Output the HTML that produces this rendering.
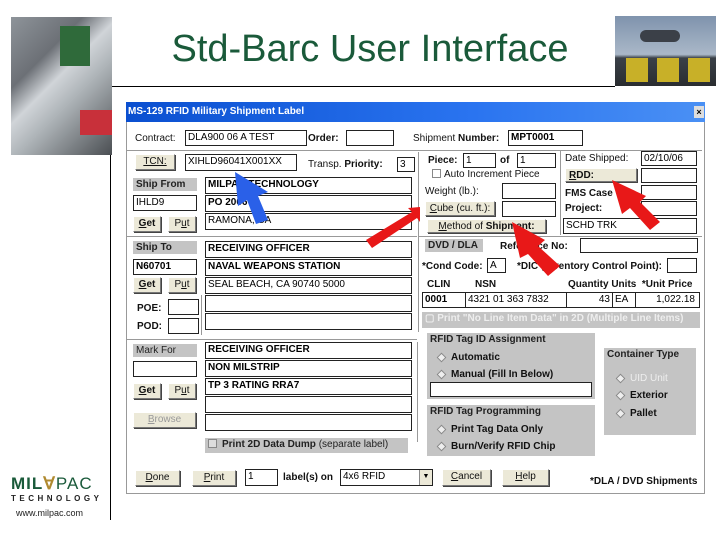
<!DOCTYPE html>
<html><head><meta charset="utf-8"><style>
*{margin:0;padding:0;box-sizing:border-box}
body{width:720px;height:540px;background:#fff;position:relative;overflow:hidden;font-family:"Liberation Sans",sans-serif}
.a{position:absolute}
.t{position:absolute;font-size:10px;color:#111;white-space:nowrap;line-height:12px}
.bd{font-weight:bold}
.i{position:absolute;background:#fff;border:1px solid #222;font-size:10px;line-height:13px;padding-left:2px;white-space:nowrap;overflow:hidden;color:#000}
.b{position:absolute;background:#ece9d8;border:1px solid;border-color:#fff #777 #777 #fff;box-shadow:1px 1px 0 #444;font-size:10px;line-height:13px;text-align:center;color:#111}
.g{position:absolute;background:#c4c4c4;font-size:10px;font-weight:bold;line-height:13px;padding-left:3px;color:#222}
.hl{position:absolute;height:1px;background:#999}
.vl{position:absolute;width:1px;background:#999}
.r{display:inline-block;width:7px;height:7px;border:1px solid #888;transform:rotate(45deg);margin-right:6px;background:#eee;vertical-align:middle}
</style></head><body>
<div class="a" style="left:11px;top:17px;width:101px;height:138px;background:linear-gradient(135deg,#8e949a 0%,#6c7076 30%,#d0d4d8 45%,#aeb4b8 60%,#4a4e52 100%)"></div>
<div class="a" style="left:60px;top:26px;width:30px;height:40px;background:#2f6a3a"></div>
<div class="a" style="left:80px;top:110px;width:32px;height:25px;background:#c8303a"></div>
<div class="a" style="left:615px;top:16px;width:101px;height:70px;background:linear-gradient(#7f93ad,#aab8c8 55%,#3a4048 60%,#2a2d30)"></div>
<div class="a" style="left:626px;top:58px;width:22px;height:24px;background:#c8b028"></div>
<div class="a" style="left:657px;top:58px;width:22px;height:24px;background:#c8b028"></div>
<div class="a" style="left:688px;top:58px;width:22px;height:24px;background:#c8b028"></div>
<div class="a" style="left:640px;top:30px;width:40px;height:12px;background:#3b4048;border-radius:6px"></div>
<div class="a" style="left:112px;top:86px;width:503px;height:1px;background:#000"></div>
<div class="a" style="left:110px;top:155px;width:1px;height:365px;background:#000"></div>
<div class="t" style="left:0;width:740px;text-align:center;top:28px;font-size:38px;line-height:42px;color:#1a5a3a">Std-Barc User Interface</div>
<div class="t" style="left:11px;top:475px;font-size:17px;line-height:17px;font-weight:900;color:#1a5a3a;letter-spacing:1px">MIL<span style="color:#b08a30">∀</span><span style="font-weight:normal">PAC</span></div>
<div class="t" style="left:11px;top:494px;font-size:8px;line-height:9px;font-weight:bold;letter-spacing:3.5px;color:#222">TECHNOLOGY</div>
<div class="t" style="left:16px;top:507px;font-size:9px;color:#222">www.milpac.com</div>
<div class="a" style="left:126px;top:102px;width:579px;height:392px;background:#fff;border:1px solid #999;border-top:none"></div>
<div class="a" style="left:126px;top:102px;width:579px;height:20px;background:linear-gradient(90deg,#0a4fd0,#2a74f0 60%,#4a90f4)"></div>
<div class="t bd" style="left:128px;top:106px;color:#fff">MS-129 RFID Military Shipment Label</div>
<div class="a" style="left:694px;top:106px;width:10px;height:12px;background:#ddd;font-size:9px;font-weight:bold;text-align:center;line-height:12px">×</div>
<div class="t" style="left:135px;top:133px">Contract:</div>
<div class="i" style="left:185px;top:130px;width:122px;height:16px">DLA900 06 A TEST</div>
<div class="t bd" style="left:308px;top:133px">Order:</div>
<div class="i" style="left:346px;top:130px;width:48px;height:16px"></div>
<div class="t" style="left:413px;top:133px">Shipment <b>Number:</b></div>
<div class="i bd" style="left:508px;top:130px;width:75px;height:16px">MPT0001</div>
<div class="hl" style="left:127px;top:150px;width:575px"></div>
<div class="b" style="left:135px;top:154px;width:40px;height:16px;text-decoration:underline">TCN:</div>
<div class="i" style="left:185px;top:154px;width:112px;height:17px">XIHLD96041X001XX</div>
<div class="t" style="left:308px;top:159px">Transp. <b>Priority:</b></div>
<div class="i" style="left:397px;top:157px;width:18px;height:15px">3</div>
<div class="vl" style="left:418px;top:152px;height:180px"></div>
<div class="vl" style="left:560px;top:150px;height:85px"></div>
<div class="t bd" style="left:428px;top:155px">Piece: </div>
<div class="i" style="left:463px;top:153px;width:33px;height:15px">1</div>
<div class="t bd" style="left:500px;top:155px">of</div>
<div class="i" style="left:517px;top:153px;width:39px;height:15px">1</div>
<div class="t" style="left:432px;top:169px"><span style="display:inline-block;width:9px;height:9px;border:1px solid #888;vertical-align:-1px;margin-right:3px"></span>Auto Increment Piece</div>
<div class="t" style="left:565px;top:153px">Date Shipped:</div>
<div class="i" style="left:641px;top:151px;width:56px;height:15px">02/10/06</div>
<div class="b bd" style="left:565px;top:168px;width:72px;height:14px;text-align:left;padding-left:3px"><u>R</u>DD:</div>
<div class="i" style="left:641px;top:168px;width:56px;height:15px"></div>
<div class="t" style="left:425px;top:186px">Weight (lb.):</div>
<div class="i" style="left:502px;top:183px;width:54px;height:16px"></div>
<div class="t bd" style="left:565px;top:188px">FMS Case</div>
<div class="i" style="left:641px;top:185px;width:56px;height:15px"></div>
<div class="b" style="left:425px;top:201px;width:70px;height:15px"><u>C</u>ube (cu. ft.):</div>
<div class="i" style="left:502px;top:201px;width:54px;height:16px"></div>
<div class="t bd" style="left:565px;top:203px">Project:</div>
<div class="i" style="left:641px;top:201px;width:56px;height:15px"></div>
<div class="b" style="left:427px;top:219px;width:119px;height:14px"><u>M</u>ethod of <b>Shipment:</b></div>
<div class="i" style="left:563px;top:218px;width:134px;height:16px">SCHD TRK</div>
<div class="hl" style="left:419px;top:236px;width:283px"></div>
<div class="g" style="left:425px;top:239px;width:58px;height:13px">DVD / DLA</div>
<div class="t bd" style="left:500px;top:241px">Reference No:</div>
<div class="i" style="left:580px;top:238px;width:118px;height:15px"></div>
<div class="t bd" style="left:422px;top:261px">*Cond Code:</div>
<div class="i" style="left:487px;top:258px;width:19px;height:15px">A</div>
<div class="t bd" style="left:517px;top:261px">*DIC (Inventory Control Point):</div>
<div class="i" style="left:667px;top:258px;width:30px;height:15px"></div>
<div class="t bd" style="left:427px;top:279px">CLIN</div>
<div class="t bd" style="left:475px;top:279px">NSN</div>
<div class="t bd" style="left:568px;top:279px">Quantity Units &nbsp;*Unit Price</div>
<div class="i bd" style="left:422px;top:292px;width:44px;height:16px">0001</div>
<div class="i" style="left:465px;top:292px;width:102px;height:16px">4321 01 363 7832</div>
<div class="i" style="left:566px;top:292px;width:47px;height:16px;text-align:right;padding-right:2px">43</div>
<div class="i" style="left:612px;top:292px;width:24px;height:16px">EA</div>
<div class="i" style="left:635px;top:292px;width:65px;height:16px;text-align:right;padding-right:4px">1,022.18</div>
<div class="g" style="left:422px;top:312px;width:278px;height:16px;color:#eee;font-weight:bold">▢ Print "No Line Item Data" in 2D (Multiple Line Items)</div>
<div class="g" style="left:427px;top:333px;width:168px;height:66px">RFID Tag ID Assignment</div>
<div class="t bd" style="left:438px;top:352px"><span class="r"></span>Automatic</div>
<div class="t bd" style="left:438px;top:369px"><span class="r"></span>Manual (Fill In Below)</div>
<div class="i" style="left:430px;top:382px;width:162px;height:15px"></div>
<div class="g" style="left:427px;top:405px;width:168px;height:51px">RFID Tag Programming</div>
<div class="t bd" style="left:438px;top:424px"><span class="r"></span>Print Tag Data Only</div>
<div class="t bd" style="left:438px;top:441px"><span class="r"></span>Burn/Verify RFID Chip</div>
<div class="g" style="left:604px;top:348px;width:92px;height:87px;font-weight:bold">Container Type</div>
<div class="t" style="left:617px;top:373px;color:#eee"><span class="r"></span>UID Unit</div>
<div class="t bd" style="left:617px;top:390px"><span class="r"></span>Exterior</div>
<div class="t bd" style="left:617px;top:408px"><span class="r"></span>Pallet</div>
<div class="g" style="left:133px;top:178px;width:64px;height:13px">Ship From</div>
<div class="i" style="left:133px;top:195px;width:64px;height:16px">IHLD9</div>
<div class="b bd" style="left:133px;top:216px;width:28px;height:16px"><u>G</u>et</div>
<div class="b" style="left:168px;top:216px;width:28px;height:16px">P<u>u</u>t</div>
<div class="i bd" style="left:205px;top:177px;width:207px;height:17px">MILPAC TECHNOLOGY</div>
<div class="i bd" style="left:205px;top:195px;width:207px;height:17px">PO 2066</div>
<div class="i" style="left:205px;top:213px;width:207px;height:17px">RAMONA, CA</div>
<div class="hl" style="left:127px;top:236px;width:290px"></div>
<div class="g" style="left:133px;top:241px;width:64px;height:13px">Ship To</div>
<div class="i bd" style="left:133px;top:259px;width:64px;height:16px">N60701</div>
<div class="b bd" style="left:133px;top:277px;width:28px;height:16px"><u>G</u>et</div>
<div class="b" style="left:168px;top:277px;width:28px;height:16px">P<u>u</u>t</div>
<div class="i bd" style="left:205px;top:241px;width:207px;height:17px">RECEIVING OFFICER</div>
<div class="i bd" style="left:205px;top:259px;width:207px;height:17px">NAVAL WEAPONS STATION</div>
<div class="i" style="left:205px;top:277px;width:207px;height:17px">SEAL BEACH, CA 90740 5000</div>
<div class="i" style="left:205px;top:295px;width:207px;height:17px"></div>
<div class="i" style="left:205px;top:313px;width:207px;height:17px"></div>
<div class="t bd" style="left:137px;top:303px">POE:</div>
<div class="i" style="left:168px;top:299px;width:31px;height:16px"></div>
<div class="t bd" style="left:137px;top:321px">POD:</div>
<div class="i" style="left:168px;top:318px;width:31px;height:16px"></div>
<div class="vl" style="left:201px;top:295px;height:40px"></div>
<div class="hl" style="left:127px;top:339px;width:290px"></div>
<div class="g" style="left:133px;top:344px;width:64px;height:13px;font-weight:normal">Mark For</div>
<div class="i" style="left:133px;top:361px;width:64px;height:16px"></div>
<div class="b bd" style="left:133px;top:383px;width:28px;height:16px"><u>G</u>et</div>
<div class="b" style="left:168px;top:383px;width:28px;height:16px">P<u>u</u>t</div>
<div class="b" style="left:133px;top:412px;width:63px;height:16px;color:#999"><u>B</u>rowse</div>
<div class="i bd" style="left:205px;top:342px;width:207px;height:17px">RECEIVING OFFICER</div>
<div class="i bd" style="left:205px;top:360px;width:207px;height:17px">NON MILSTRIP</div>
<div class="i bd" style="left:205px;top:378px;width:207px;height:17px">TP 3 RATING RRA7</div>
<div class="i" style="left:205px;top:396px;width:207px;height:17px"></div>
<div class="i" style="left:205px;top:414px;width:207px;height:17px"></div>
<div class="vl" style="left:417px;top:342px;height:100px"></div>
<div class="g" style="left:205px;top:438px;width:203px;height:15px"><span style="display:inline-block;width:9px;height:9px;border:1px solid #888;background:#ddd;vertical-align:-1px;margin-right:5px"></span>Print 2D Data Dump <span style="font-weight:normal">(separate label)</span></div>
<div class="b" style="left:135px;top:470px;width:45px;height:16px"><u>D</u>one</div>
<div class="b" style="left:192px;top:470px;width:44px;height:16px"><u>P</u>rint</div>
<div class="i" style="left:245px;top:469px;width:33px;height:17px">1</div>
<div class="t bd" style="left:283px;top:472px">label(s) on</div>
<div class="i" style="left:340px;top:469px;width:93px;height:17px">4x6 RFID<span style="position:absolute;right:0;top:0;width:13px;height:15px;background:#ece9d8;border-left:1px solid #888;font-size:7px;text-align:center">▼</span></div>
<div class="b" style="left:442px;top:469px;width:49px;height:17px"><u>C</u>ancel</div>
<div class="b" style="left:502px;top:469px;width:47px;height:17px"><u>H</u>elp</div>
<div class="t bd" style="left:590px;top:476px">*DLA / DVD Shipments</div>
<svg class="a" style="left:0;top:0" width="720" height="540">
<g fill="#2a60e8"><polygon points="235,172 268,192 258,196 268,220 256,224 247,200 238,206"/></g>
<g fill="#e81818">
<polygon points="420,207 408,208 412,212 366,240 372,248 417,218 420,222"/>
<polygon points="512,222 520,258 528,254 548,276 560,266 538,246 545,240"/>
<polygon points="612,180 622,214 630,208 650,230 660,222 640,202 646,196"/>
</g></svg>
</body></html>
